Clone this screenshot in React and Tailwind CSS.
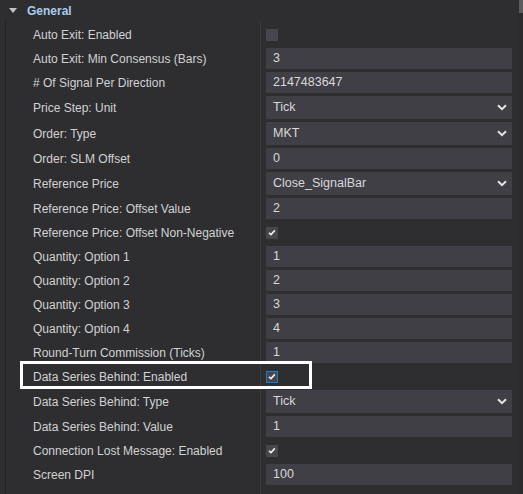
import React from 'react';

const ROWS = [
  { label: 'Auto Exit: Enabled', type: 'check', checked: false },
  { label: 'Auto Exit: Min Consensus (Bars)', type: 'input', value: '3' },
  { label: '# Of Signal Per Direction', type: 'input', value: '2147483647' },
  { label: 'Price Step: Unit', type: 'select', value: 'Tick' },
  { label: 'Order: Type', type: 'select', value: 'MKT' },
  { label: 'Order: SLM Offset', type: 'input', value: '0' },
  { label: 'Reference Price', type: 'select', value: 'Close_SignalBar' },
  { label: 'Reference Price: Offset Value', type: 'input', value: '2' },
  { label: 'Reference Price: Offset Non-Negative', type: 'check', checked: true },
  { label: 'Quantity: Option 1', type: 'input', value: '1' },
  { label: 'Quantity: Option 2', type: 'input', value: '2' },
  { label: 'Quantity: Option 3', type: 'input', value: '3' },
  { label: 'Quantity: Option 4', type: 'input', value: '4' },
  { label: 'Round-Turn Commission (Ticks)', type: 'input', value: '1' },
  { label: 'Data Series Behind: Enabled', type: 'check', checked: true, focused: true },
  { label: 'Data Series Behind: Type', type: 'select', value: 'Tick' },
  { label: 'Data Series Behind: Value', type: 'input', value: '1' },
  { label: 'Connection Lost Message: Enabled', type: 'check', checked: true },
  { label: 'Screen DPI', type: 'input', value: '100' },
];

/* ── Small checkbox ── */
const Check = ({ checked, focused }) => (
  <div className="h-[21px] flex items-center">
    <div
      className={`w-[12px] h-[12px] bg-[#46464c] flex items-center justify-center ${
        focused ? 'border border-[#1e7bd4]' : ''
      }`}
    >
      {checked && (
        <svg width="8" height="7" viewBox="0 0 8 7">
          <path d="M1 3.8 L3 5.6 L6.8 1.4" fill="none" stroke="#f0f0f0" strokeWidth="1.6" />
        </svg>
      )}
    </div>
  </div>
);

const Value = ({ row }) => {
  if (row.type === 'check') return <Check checked={row.checked} focused={row.focused} />;
  if (row.type === 'select')
    return (
      <div className="h-[23px] bg-[#3f3f45] flex items-center justify-between pl-[7px] pr-[5px] text-[12.5px] text-[#d8d8d8]">
        <span>{row.value}</span>
        <svg width="10" height="7" viewBox="0 0 10 7">
          <path d="M1 1.2 L5 5.2 L9 1.2" fill="none" stroke="#e4e4e4" strokeWidth="2" />
        </svg>
      </div>
    );
  return (
    <div className="h-[21px] bg-[#3f3f45] flex items-center pl-[7px] text-[12.5px] text-[#d8d8d8]">
      {row.value}
    </div>
  );
};

export default function App() {
  return (
    <div
      className="relative w-[523px] h-[494px] bg-[#2e2e31] flex overflow-hidden"
      style={{ fontFamily: '"Liberation Sans", Arial, sans-serif' }}
    >
      <div className="w-[519px] flex flex-col">
        {/* ── Category header ── */}
        <div className="h-[21px] flex items-center pl-[9px] gap-[10px]">
          <svg width="8" height="5" viewBox="0 0 8 5">
            <path d="M0 0 L8 0 L4 5 Z" fill="#c4c4c4" />
          </svg>
          <span className="text-[12px] font-bold text-[#a9cbec]">General</span>
        </div>

        {/* ── Property rows ── */}
        <div className="ml-[5px] border-l border-[#232326] flex-1 flex flex-col">
          {ROWS.map((row) => (
            <div key={row.label} className="flex">
              <div className="w-[254px] pt-[3px] flex items-center pl-[27px] text-[12px] text-[#d2d2d2] whitespace-nowrap">
                {row.label}
              </div>
              <div className="flex-1 border-l border-[#3a3a3e] pt-[3px] pl-[5px] pr-[7px]">
                <Value row={row} />
              </div>
            </div>
          ))}
          <div className="flex flex-1">
            <div className="w-[254px]" />
            <div className="flex-1 border-l border-[#3a3a3e]" />
          </div>
        </div>
      </div>

      {/* ── Scrollbar ── */}
      <div className="w-[4px] bg-[#2b2b2e]">
        <div className="h-[13px] bg-[#5a5a5f]" />
      </div>

      {/* ── Highlight box ── */}
      <div className="absolute left-[20px] top-[361px] w-[292px] h-[28px] border-[3px] border-white" />
    </div>
  );
}
